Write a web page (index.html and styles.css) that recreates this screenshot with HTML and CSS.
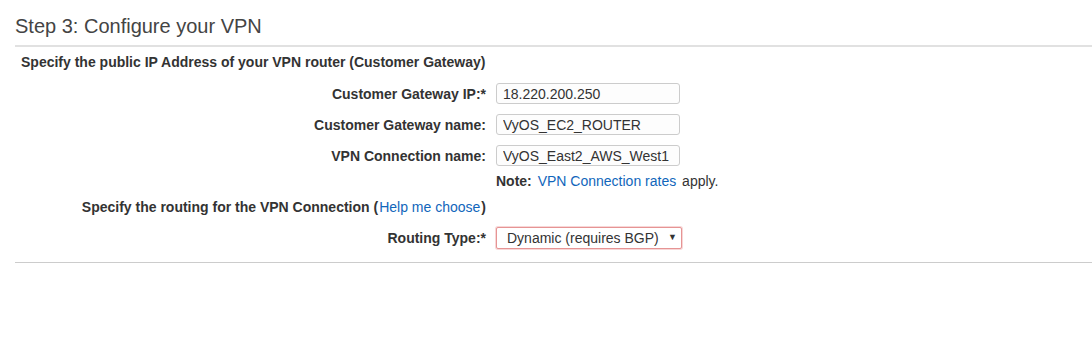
FILE: index.html
```html
<!DOCTYPE HTML>
<html>
	<head>
		<title>Step 3: Configure your VPN</title>
		<meta name="viewport" content="width=device-width, initial-scale=1.0">
		<link rel="stylesheet" href="styles.css">
	</head>
	<body>
	<main class="wizard">
		<h2 class="step-title">Step 3: Configure your VPN</h2>
		<div class="section-title">Specify the public IP Address of your VPN router (Customer Gateway)</div>
		<div class="form-grid">
			<label class="field-label" for="cgw-ip">Customer Gateway IP:*</label>
			<div><input class="text-input" id="cgw-ip" type="text" value="18.220.200.250"></div>

			<label class="field-label" for="cgw-name">Customer Gateway name:</label>
			<div><input class="text-input" id="cgw-name" type="text" value="VyOS_EC2_ROUTER"></div>

			<label class="field-label" for="vpn-name">VPN Connection name:</label>
			<div><input class="text-input" id="vpn-name" type="text" value="VyOS_East2_AWS_West1"></div>

			<div></div>
			<div class="note"><b>Note:</b> <a href="#">VPN Connection rates</a> apply.</div>

			<div class="field-label routing-spec">Specify the routing for the VPN Connection (<a href="#">Help me choose</a>)</div>
			<div></div>

			<label class="field-label routing-type" for="routing">Routing Type:*</label>
			<div class="routing-type">
				<div class="select-wrap">
					<select id="routing" class="select-input">
						<option>Dynamic (requires BGP)</option>
						<option>Static</option>
					</select>
					<span class="select-arrow">&#9660;</span>
				</div>
			</div>
		</div>
	</main>
	</body>
</html>
```

FILE: styles.css
```css
html{
	height: 100%;
}

body{
	margin: 0;
	font-family: "Liberation Sans", Arial, sans-serif;
	color: #444;
	background: #fff;
}

.wizard{
	padding: 0 0 0 15px;
}

.step-title{
	font-size: 20px;
	font-weight: normal;
	color: #444;
	margin: 0;
	padding: 15px 0 7px 0;
	line-height: 23px;
	border-bottom: 2px solid #e1e1e1;
}

.section-title{
	font-size: 14px;
	font-weight: bold;
	color: #333;
	padding: 7px 0 0 6px;
	line-height: 16px;
}

.form-grid{
	display: grid;
	grid-template-columns: 471px 1fr;
	column-gap: 10px;
	row-gap: 10px;
	align-items: center;
	padding: 13px 0 13px 0;
	border-bottom: 1px solid #ccc;
}

.field-label{
	text-align: right;
	font-size: 14px;
	font-weight: bold;
	color: #333;
}

.field-label a{
	font-weight: normal;
	margin: 0 1px;
}

a{
	color: #1166bb;
	text-decoration: none;
}

.text-input{
	box-sizing: border-box;
	width: 184px;
	height: 21px;
	padding: 0 6px;
	font-family: "Liberation Sans", Arial, sans-serif;
	font-size: 14px;
	color: #333;
	border: 1px solid #ccc;
	border-radius: 3px;
	background: #fdfdfd;
	outline: none;
}

.note{
	font-size: 14px;
	color: #333;
	margin: -3px 0 0 0;
}

.note a{
	margin: 0 2px;
}

.routing-spec{
	margin: 0;
}

.routing-type{
	margin: 2px 0 0 0;
}

.select-wrap{
	position: relative;
	display: inline-block;
}

.select-input{
	-webkit-appearance: none;
	appearance: none;
	box-sizing: border-box;
	width: 186px;
	height: 22px;
	padding: 0 0 0 10px;
	font-family: "Liberation Sans", Arial, sans-serif;
	font-size: 14px;
	color: #333;
	background: #fff;
	border: 1px solid #e69494;
	box-shadow: 0 0 0 1px rgba(240, 175, 175, 0.5);
	border-radius: 2px;
	outline: none;
}

.select-arrow{
	position: absolute;
	right: 5px;
	top: 5px;
	font-size: 9px;
	color: #333;
	pointer-events: none;
}
```
